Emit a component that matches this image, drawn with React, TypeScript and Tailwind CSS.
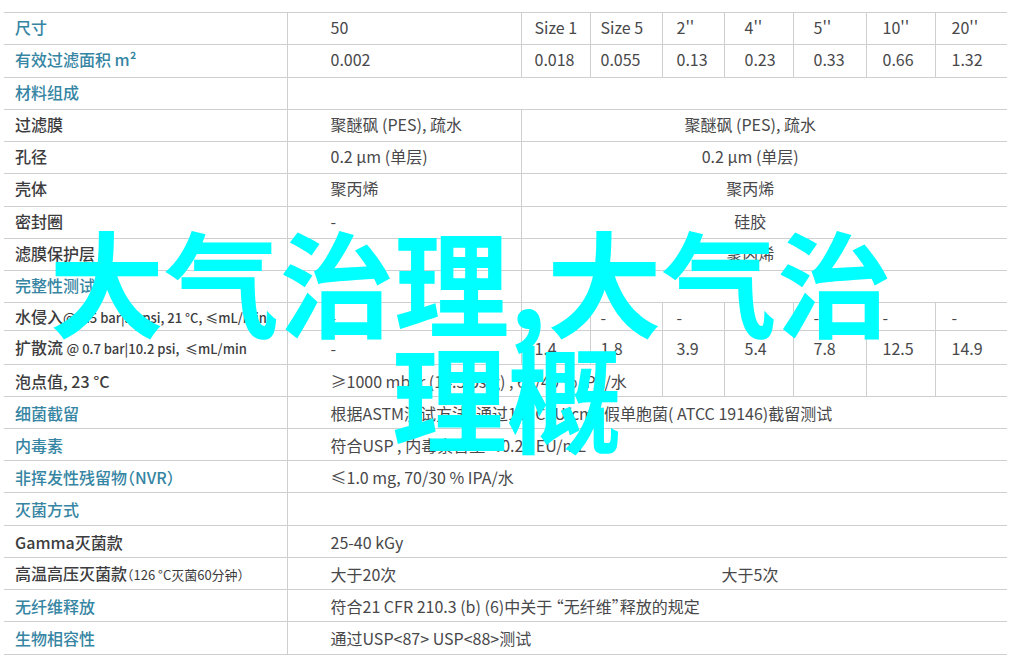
import clsx from "clsx";
import type { ReactNode } from "react";

interface Cell {
  text?: ReactNode;
  span?: number;
  centered?: boolean;
  open?: boolean;
  inset?: string;
}

interface Row {
  label: ReactNode;
  heading?: boolean;
  height?: string;
  cells: Cell[];
}

const insets = ["pl-[13px]", "pl-[10px]", "pl-[14px]", "pl-5", "pl-5", "pl-4", "pl-4"];

const sizes = (values: string[]): Cell[] =>
  values.map((text, i) => ({ text, inset: insets[i] }));

const materialRows: Row[] = [
  {
    label: "尺寸",
    heading: true,
    cells: [{ text: "50" }, ...sizes(["Size 1", "Size 5", "2''", "4''", "5''", "10''", "20''"])],
  },
  {
    label: "有效过滤面积 m²",
    heading: true,
    height: "h-[33px]",
    cells: [
      { text: "0.002" },
      ...sizes(["0.018", "0.055", "0.13", "0.23", "0.33", "0.66", "1.32"]),
    ],
  },
  { label: "材料组成", heading: true, cells: [{ span: 8 }] },
  {
    label: "过滤膜",
    cells: [{ text: "聚醚砜 (PES), 疏水" }, { text: "聚醚砜 (PES), 疏水", span: 7, centered: true }],
  },
  {
    label: "孔径",
    cells: [{ text: "0.2 μm (单层)" }, { text: "0.2 μm (单层)", span: 7, centered: true }],
  },
  {
    label: "壳体",
    height: "h-[33px]",
    cells: [{ text: "聚丙烯" }, { text: "聚丙烯", span: 7, centered: true }],
  },
  { label: "密封圈", cells: [{ text: "-" }, { text: "硅胶", span: 7, centered: true }] },
  { label: "滤膜保护层", cells: [{ text: "-" }, { text: "聚丙烯", span: 7, centered: true }] },
  { label: "完整性测试", heading: true, cells: [{}, { span: 7 }] },
];

const testRows: Row[] = [
  {
    label: (
      <>
        水侵入<span className="text-[13px]">@ 2.5 bar|36 psi, 21 °C, ≤mL/min</span>
      </>
    ),
    height: "h-7",
    cells: [{ text: "-" }, ...sizes(["-", "-", "-", "-", "-", "-", "-"])],
  },
  {
    label: (
      <>
        扩散流 <span className="text-[13px]">@ 0.7 bar|10.2 psi, &nbsp;≤mL/min</span>
      </>
    ),
    height: "h-[34px]",
    cells: [{ text: "-" }, ...sizes(["1.4", "1.8", "3.9", "5.4", "7.8", "12.5", "14.9"])],
  },
  {
    label: "泡点值, 23 °C",
    cells: [
      { text: "≥1000 mbar (14.5 psig) , 60/40 % IPA/水", span: 3 },
      ...sizes(["", "", "", "", ""]),
    ],
  },
  {
    label: "细菌截留",
    heading: true,
    cells: [{ text: "根据ASTM测试方法, 通过10⁷ CFU/cm² 假单胞菌( ATCC 19146)截留测试", span: 8 }],
  },
  {
    label: "内毒素",
    heading: true,
    cells: [{ text: "符合USP , 内毒素含量≤0.25 EU/mL", span: 8 }],
  },
  {
    label: "非挥发性残留物（NVR）",
    heading: true,
    cells: [{ text: "≤1.0 mg, 70/30 % IPA/水", span: 8 }],
  },
  { label: "灭菌方式", heading: true, height: "h-[33px]", cells: [{ span: 8 }] },
  { label: "Gamma灭菌款", cells: [{ text: "25-40 kGy", span: 8 }] },
  {
    label: (
      <>
        高温高压灭菌款<span className="text-[13px] font-normal">（126 °C灭菌60分钟）</span>
      </>
    ),
    cells: [{ text: "大于20次" }, { text: "大于5次", span: 7, centered: true, open: true }],
  },
  {
    label: "无纤维释放",
    heading: true,
    cells: [{ text: "符合21 CFR 210.3 (b) (6)中关于 “无纤维”释放的规定", span: 8 }],
  },
  {
    label: "生物相容性",
    heading: true,
    height: "h-[33px]",
    cells: [{ text: "通过USP<87> USP<88>测试", span: 8 }],
  },
];

function SpecRow({ row, padding }: { row: Row; padding: string }) {
  return (
    <tr className={clsx("border-b border-[#cfcfd1]", row.height ?? "h-8")}>
      <th
        scope="row"
        className={clsx(
          "pl-[11px] text-left font-medium whitespace-nowrap",
          padding,
          row.heading ? "text-[#3585a3]" : "text-[#3c3c3e]",
        )}
      >
        {row.label}
      </th>
      {row.cells.map((cell, i) => (
        <td
          key={i}
          colSpan={cell.span}
          className={clsx(
            "whitespace-nowrap",
            padding,
            !cell.open && "border-l border-[#cfcfd1]",
            cell.centered ? "pr-7 text-center" : (cell.inset ?? "pl-[43px]"),
          )}
        >
          {cell.text}
        </td>
      ))}
    </tr>
  );
}

export default function App() {
  return (
    <main
      lang="zh-CN"
      className="relative bg-white pt-3 pr-[7px] pb-[6px] pl-1 font-['Noto_Sans_CJK_SC',sans-serif] text-base leading-6 text-[#48484a]"
    >
      <table className="w-full table-fixed border-collapse border-y border-[#cfcfd1] [font-feature-settings:'halt']">
        <colgroup>
          <col className="w-[283px]" />
          <col className="w-[234px]" />
          <col className="w-[69px]" />
          <col className="w-[72px]" />
          <col className="w-[62px]" />
          <col className="w-[69px]" />
          <col className="w-[73px]" />
          <col className="w-[69px]" />
          <col className="w-[72px]" />
        </colgroup>
        <tbody>
          {materialRows.map((row, i) => (
            <SpecRow key={i} row={row} padding="pb-1" />
          ))}
        </tbody>
        <tbody>
          {testRows.map((row, i) => (
            <SpecRow key={i} row={row} padding="pb-0" />
          ))}
        </tbody>
      </table>
      <h1 className="pointer-events-none absolute inset-x-0 top-[222px] flex flex-col items-center text-[115px] leading-[115px] font-bold whitespace-nowrap text-[#00ffff]">
        <span className="pr-[73px]">大气治理,大气治</span>
        <span>理概</span>
      </h1>
    </main>
  );
}
